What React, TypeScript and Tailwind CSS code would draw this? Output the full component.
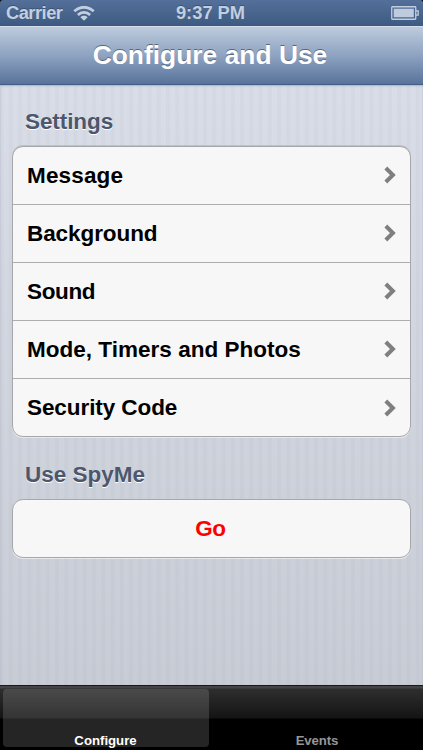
import React from 'react';

interface SettingsRow {
    id: string;
    label: string;
    tracking: string;
}

const rows: SettingsRow[] = [
    { id: 'message', label: 'Message', tracking: 'tracking-[0.15px]' },
    { id: 'background', label: 'Background', tracking: 'tracking-[-0.08px]' },
    { id: 'sound', label: 'Sound', tracking: 'tracking-[-0.35px]' },
    { id: 'mode', label: 'Mode, Timers and Photos', tracking: 'tracking-[0.02px]' },
    { id: 'security', label: 'Security Code', tracking: 'tracking-[-0.08px]' },
];

const WifiIcon: React.FC = () => (
    <svg className="ml-[10px] h-[15px] w-[22px]" viewBox="0 0 22 15" fill="none" stroke="#c3cfdf" strokeWidth="2.8">
        <path d="M1.3 5.2C6.8 -0.1 15.2 -0.1 20.7 5.2" />
        <path d="M4.9 8.9C8.4 5.5 13.6 5.5 17.1 8.9" />
        <path d="M11 14.8L7.4 11.3C9.4 9.4 12.6 9.4 14.6 11.3Z" fill="#c3cfdf" stroke="none" />
    </svg>
);

const BatteryIcon: React.FC = () => (
    <svg className="mb-px h-[14px] w-[28px]" viewBox="0 0 28 14" fill="none">
        <rect x="0.75" y="0.75" width="24" height="12.5" rx="0.7" stroke="#c3cfdf" strokeWidth="1.3" />
        <rect x="2.7" y="2.7" width="20.1" height="8.6" fill="#bfcbdc" />
        <path d="M25 4.8H27.2V9.2H25" stroke="#c3cfdf" strokeWidth="1.3" />
    </svg>
);

const Chevron: React.FC = () => (
    <svg className="mb-px h-[18px] w-[12px]" viewBox="0 0 12 18" fill="none">
        <path d="M1.8 2L8.9 9L1.8 16" stroke="#7f7f7f" strokeWidth="4" />
    </svg>
);

const StatusBar: React.FC = () => (
    <div className="grid h-[26px] grid-cols-3 items-center bg-linear-to-b from-[#54709a] to-[#3d5a82] text-[18.3px] leading-[26px] font-bold text-[#c3cfdf] [text-shadow:0_-1px_0_#3b5376]">
        <div className="flex items-center pl-[6px]">
            <span className="w-[57px] tracking-[-0.5px]">Carrier</span>
            <WifiIcon />
        </div>
        <span className="pr-[2px] text-center whitespace-nowrap">9:37 PM</span>
        <div className="flex justify-end pr-[4px]">
            <BatteryIcon />
        </div>
    </div>
);

export default function App() {
    return (
        <div className="h-[750px] w-[423px] overflow-hidden bg-black font-['Liberation_Sans',Arial,sans-serif]">
            <div className="flex h-full flex-col overflow-hidden rounded-t-[3px]">
                <StatusBar />
                <header className="h-[59px] border-t border-b border-t-[#d5deea] border-b-[#435e86] bg-linear-to-b from-[#bdcbdd] via-[#8ea3c1] to-[#58739b] pr-[3px] text-center text-[26.4px] leading-[57px] font-bold text-white [text-shadow:0_-1.3px_0_#5b6677]">
                    Configure and Use
                </header>
                <main className="h-[600px] bg-[repeating-linear-gradient(90deg,rgba(105,120,145,0.045)_0px,rgba(105,120,145,0.045)_3px,transparent_4px,transparent_8.25px,rgba(105,120,145,0.045)_9.25px),linear-gradient(#d9dde7,#c8ccd5)] px-[12px] shadow-[inset_0_1px_2px_#aeb4c1]">
                    <h2 className="h-[61px] pt-[23px] pl-[13px] text-[22.5px] leading-[28px] font-bold text-[#4c566c] tracking-[-0.08px] [text-shadow:0_1.3px_0_#fff]">Settings</h2>
                    <ul className="h-[291px] rounded-[11px] border border-[#a6a7ab] bg-[#f7f7f7] shadow-[0_1px_0_#e7e9ed,0_-1px_0_#c0c2c9]">
                        {rows.map(row => (
                            <li key={row.id} className="flex h-[58px] items-center justify-between border-b border-[#adadaf] pr-[14px] pl-[14px] text-[22.5px] font-bold text-black last:border-b-0">
                                <span className={row.tracking}>{row.label}</span>
                                <Chevron />
                            </li>
                        ))}
                    </ul>
                    <h2 className="h-[62px] pt-[24px] pl-[13px] text-[22.5px] leading-[28px] font-bold text-[#4c566c] [text-shadow:0_1.3px_0_#fff]">Use SpyMe</h2>
                    <button className="block h-[59px] w-full rounded-[11px] border border-[#a6a7ab] bg-[#f7f7f7] pr-[2px] text-[22.5px] leading-[58px] font-bold tracking-[-0.3px] text-[#fe0000] shadow-[0_1px_0_#e7e9ed]">Go</button>
                </main>
                <nav className="flex h-[65px] border-t border-[#17191c] bg-[linear-gradient(#444_0px,#444_2px,#2e2e2e_3px,#141414_32px,#000_33px)] text-[13.2px] leading-[16px] font-bold">
                    <div className="mt-[3px] ml-[3px] flex h-[58px] w-[206px] items-end justify-center rounded-[4px] bg-[linear-gradient(#4a4a4a_0px,#343434_29px,#252525_30px)] pr-[1px] text-white">
                        <span className="translate-y-[2px]">Configure</span>
                    </div>
                    <div className="flex h-[61px] flex-1 items-end justify-center pl-[2px] text-[#969696]">
                        <span className="translate-y-[2px] tracking-[-0.1px]">Events</span>
                    </div>
                </nav>
            </div>
        </div>
    );
}
